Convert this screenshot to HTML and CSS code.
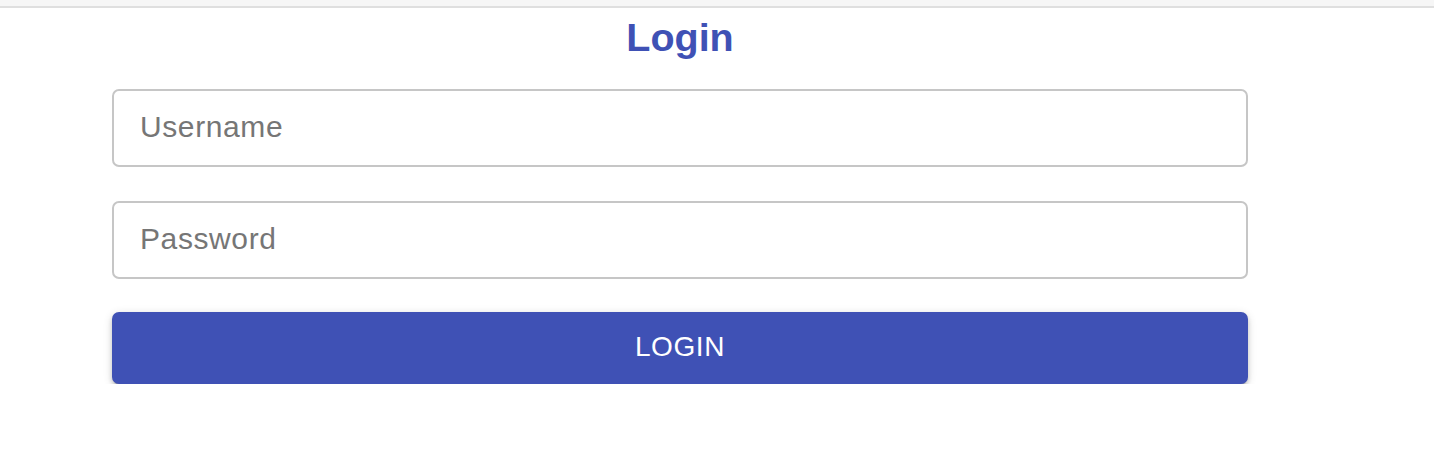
FILE: index.html
```html
<!DOCTYPE html>
<html lang="en">
<head>
<meta charset="utf-8">
<title>Login</title>
<link rel="stylesheet" href="styles.css">
</head>
<body>
<div class="topbar"></div>
<main class="container">
  <h1 class="title">Login</h1>
  <form class="form">
    <input class="field" type="text" placeholder="Username">
    <input class="field" type="password" placeholder="Password">
    <button class="btn" type="button">Login</button>
  </form>
</main>
</body>
</html>
```

FILE: styles.css
```css
html, body {
  margin: 0;
  padding: 0;
  background: #ffffff;
  font-family: "Liberation Sans", Arial, Helvetica, sans-serif;
}

.topbar {
  height: 6px;
  background: #f6f6f6;
  border-bottom: 2px solid #dfdfdf;
}

.container {
  width: 1136px;
  margin-left: 112px;
  display: flex;
  flex-direction: column;
}

.title {
  margin: 6px 0 0 0;
  font-size: 39.5px;
  line-height: 46px;
  font-weight: 700;
  color: #3f51b5;
  text-align: center;
}

.form {
  display: flex;
  flex-direction: column;
  margin-top: 29px;
}

.field {
  box-sizing: border-box;
  width: 100%;
  height: 78px;
  margin: 0 0 34px 0;
  padding: 0 26px 3px 26px;
  border: 2px solid #c6c6c6;
  border-radius: 7px;
  background: #ffffff;
  font-family: "Liberation Sans", Arial, Helvetica, sans-serif;
  font-size: 30px;
  letter-spacing: 0.6px;
  color: #222;
  outline: none;
}

.field + .field {
  margin-bottom: 33px;
}

.field::placeholder {
  color: #767676;
  opacity: 1;
}

.btn {
  box-sizing: border-box;
  width: 100%;
  height: 72px;
  padding: 0 0 3px 0;
  border: none;
  border-radius: 7px;
  background: #3f51b5;
  color: #ffffff;
  font-family: "Liberation Sans", Arial, Helvetica, sans-serif;
  font-size: 28px;
  letter-spacing: 0.6px;
  text-transform: uppercase;
  cursor: pointer;
  box-shadow: 0 5px 2px -3px rgba(0,0,0,0.22), 0 3px 4px 0 rgba(0,0,0,0.16), 0 2px 10px 0 rgba(0,0,0,0.14);
}
```
